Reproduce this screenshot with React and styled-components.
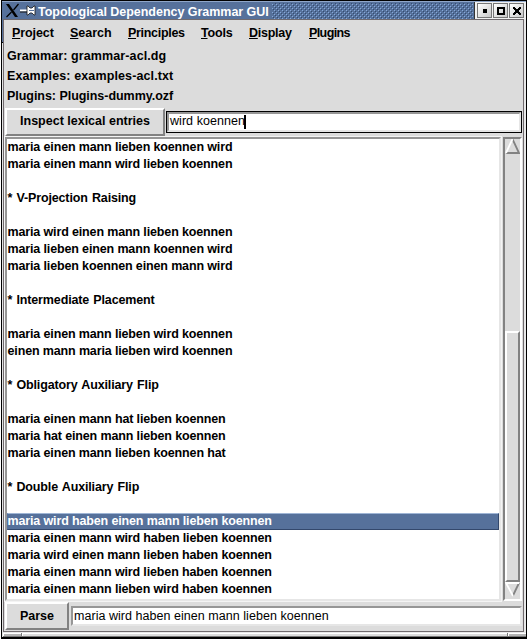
import React from "react";
import styled, { createGlobalStyle } from "styled-components";

const GlobalStyle = createGlobalStyle`
  * { box-sizing: border-box; }
  body { margin: 0; background: #fff; overflow: hidden; }
`;

const Frame = styled.div`
  width: 526px;
  height: 639px;
  margin-left: 1px;
  display: flex;
  flex-direction: column;
  border: solid #000;
  border-width: 1px 1px 2px 1px;
  background: linear-gradient(#56719b 0 41px, #000 41px 42px, #e4e4e4 42px) left / 2px 100% no-repeat #e8e8e8;
  font: bold 12.5px/17px "Liberation Sans", Arial, sans-serif;
  color: #000;
`;

const TitleBar = styled.header`
  height: 18px;
  flex: none;
  display: flex;
  align-items: center;
  background: #56719b;
  border-top: 1px solid #8fa6c8;
  color: #fff;
  padding-left: 4px;
`;

const TitleIcons = styled.svg`
  flex: none;
  width: 32px;
  height: 15px;
`;

const Title = styled.span`
  width: 234px;
  flex: none;
  white-space: pre;
  line-height: 17px;
  padding-top: 4px;
  letter-spacing: -0.03px;
`;

const Stipple = styled.div`
  flex: 1;
  height: 16px;
  background:
    conic-gradient(from 0deg at 1px 1px, transparent 75%, #86a9da 0) 0 1px / 4px 4px,
    conic-gradient(from 0deg at 1px 1px, transparent 75%, #86a9da 0) 2px 3px / 4px 4px,
    conic-gradient(from 0deg at 1px 1px, transparent 75%, #344c70 0) 1px 2px / 4px 4px,
    conic-gradient(from 0deg at 1px 1px, transparent 75%, #344c70 0) 3px 4px / 4px 4px,
    #56719b;
`;

const WindowButtons = styled.div`
  display: flex;
  align-self: stretch;
  gap: 1px;
  padding: 1px 0 0 2px;
  margin-left: 1px;
  width: 52px;
  background: #f0f0f0;
  border-left: 1px solid #333;
`;

const WindowButton = styled.span`
  width: 15px;
  height: 15px;
  border: 1px solid #777;
  background: linear-gradient(135deg, #fff, #c8c8c8);
  svg { display: block; width: 13px; height: 13px; }
`;

const Client = styled.main`
  width: 521px;
  height: 613px;
  flex: none;
  margin-left: 1px;
  display: flex;
  flex-direction: column;
  background: #dcdcdc;
  border: 1px solid #706a6e;
  padding: 0 1px 0 1px;
`;

const MenuBar = styled.nav`
  height: 26px;
  display: flex;
  padding: 5px 0 0 7px;
`;

const MenuItem = styled.span`
  width: ${(p) => p.$width}px;
  letter-spacing: ${(p) => p.$spacing}px;
  white-space: pre;
  u { text-decoration-thickness: 1px; text-underline-offset: 1px; text-decoration-skip-ink: none; }
`;

const InfoLine = styled.div`
  height: 20px;
  padding: 2px 0 0 2px;
  letter-spacing: ${(p) => p.$spacing}px;
  white-space: pre;
`;

const ControlRow = styled.div`
  display: flex;
  align-items: center;
  height: ${(p) => p.$height}px;
  gap: ${(p) => p.$gap}px;
  flex: none;
`;

const PushButton = styled.button`
  width: ${(p) => p.$width}px;
  height: 28px;
  padding: 0;
  flex: none;
  font: inherit;
  color: inherit;
  background: #dcdcdc;
  border: 2px solid;
  border-color: #fff #828282 #828282 #fff;
`;

const Entry = styled.div`
  flex: 1;
  height: ${(p) => (p.$focused ? 22 : 20)}px;
  border: ${(p) => (p.$focused ? "1px solid #000" : "0 solid")};
`;

const EntryField = styled.div`
  height: 100%;
  display: flex;
  align-items: center;
  background: #fff;
  border: 2px solid;
  border-color: #969696 #e6e6e6 #e6e6e6 #969696;
  padding-left: 1px;
  font-weight: 400;
  letter-spacing: ${(p) => p.$spacing}px;
  white-space: pre;
`;

const Caret = styled.i`
  width: 2px;
  height: 14px;
  margin-left: -1px;
  background: #000;
`;

const Body = styled.div`
  height: 464px;
  display: flex;
  flex: none;
`;

const ListBox = styled.div`
  width: 496px;
  border: 2px solid;
  border-color: #969696 #e6e6e6 #e6e6e6 #969696;
  background: #fff;
  outline: 1px solid #f4f4f4;
`;

const ListRow = styled.div`
  height: 17px;
  padding-left: ${(p) => (p.$selected ? 0 : 0.5)}px;
  letter-spacing: ${(p) => (p.$heading ? -0.14 : -0.14)}px;
  word-spacing: ${(p) => (p.$heading ? 0.9 : 0)}px;
  text-indent: ${(p) => (p.$selected ? -0.5 : 0)}px;
  white-space: pre;
  line-height: ${(p) => (p.$selected ? 15 : 17)}px;
  border: ${(p) => (p.$selected ? "1px solid" : "0 solid")};
  border-color: #9fb5d5 #33486c #33486c #56719b;
  background: ${(p) => (p.$selected ? "#56719b" : "#fff")};
  color: ${(p) => (p.$selected ? "#fff" : "#000")};
`;

const ScrollBar = styled.div`
  width: 19px;
  margin-left: 2px;
  display: flex;
  flex-direction: column;
  border: 2px solid;
  border-color: #828282 #fff #fff #828282;
  background: #dcdcdc;
  svg { display: block; flex: none; }
`;

const Track = styled.div`
  height: 177px;
`;

const Thumb = styled.div`
  height: 251px;
  border: 2px solid;
  border-color: #fff #828282 #828282 #fff;
`;

const ResizeBar = styled.footer`
  flex: 1;
  display: flex;
  margin: 1px 0 0 1px;
  gap: 1px;
  background: #777;
  border-bottom: 1px solid #777;
`;

const Grip = styled.span`
  flex: ${(p) => (p.$wide ? "1" : "0 0 18px")};
  background: ${(p) => (p.$wide ? "#dcdcdc" : "#b4b4b4")};
  border-top: 1px solid #fff;
  border-left: 1px solid #fff;
`;

const menus = [
  ["Project", 58, -0.1],
  ["Search", 58, 0],
  ["Principles", 73, -0.3],
  ["Tools", 48, -0.2],
  ["Display", 60, -0.25],
  ["Plugins", 50, -0.6],
];

const sentences = [
  "maria einen mann lieben koennen wird",
  "maria einen mann wird lieben koennen",
  "",
  "* V-Projection Raising",
  "",
  "maria wird einen mann lieben koennen",
  "maria lieben einen mann koennen wird",
  "maria lieben koennen einen mann wird",
  "",
  "* Intermediate Placement",
  "",
  "maria einen mann lieben wird koennen",
  "einen mann maria lieben wird koennen",
  "",
  "* Obligatory Auxiliary Flip",
  "",
  "maria einen mann hat lieben koennen",
  "maria hat einen mann lieben koennen",
  "maria einen mann lieben koennen hat",
  "",
  "* Double Auxiliary Flip",
  "",
  "maria wird haben einen mann lieben koennen",
  "maria einen mann wird haben lieben koennen",
  "maria wird einen mann lieben haben koennen",
  "maria einen mann wird lieben haben koennen",
  "maria einen mann lieben wird haben koennen",
];

function Arrow({ down }) {
  return (
    <svg width="15" height="15" viewBox="0 0 15 15" fill="none" strokeWidth="1.8">
      {down ? (
        <>
          <path d="M14 1 8 13.5" stroke="#828282" />
          <path d="M14 1H1L8 14" stroke="#fff" />
        </>
      ) : (
        <>
          <path d="M7.5 0 14 14H1" stroke="#828282" />
          <path d="M7.5 0 1 14" stroke="#fff" />
        </>
      )}
    </svg>
  );
}

export default function App() {
  return (
    <>
      <GlobalStyle />
      <Frame>
        <TitleBar>
          <TitleIcons viewBox="0 0 32 15">
            <path d="M0 1h3l9 13H9z" fill="#000" />
            <path d="M12.5 1 7.5 7M5.5 9 .5 14" stroke="#000" strokeWidth="1.2" />
            <path d="M14 6.5h7v2h-7z" fill="#fff" />
            <path d="M14 9h7" stroke="#111" />
            <path d="M21 3h1l2 2h2l2-2h1v9h-1l-2-2h-2l-2 2h-1z" fill="#fff" stroke="#111" strokeWidth=".8" />
            <path d="M23 7.5h5" stroke="#56719b" />
          </TitleIcons>
          <Title>Topological Dependency Grammar GUI</Title>
          <Stipple />
          <WindowButtons>
            <WindowButton>
              <svg viewBox="0 0 13 13"><path d="M5 5h4v4H5z" /></svg>
            </WindowButton>
            <WindowButton>
              <svg viewBox="0 0 13 13"><path d="M4 4h6v6H4z" fill="none" stroke="#000" strokeWidth="2" /></svg>
            </WindowButton>
            <WindowButton>
              <svg viewBox="0 0 13 13" shapeRendering="crispEdges">
                <path d="M3 3h2v1h1v1h2V4h1V3h2v2h-1v1H9v2h1v1h1v2H9v-1H8V9H6v1H5v1H3V9h1V8h1V6H4V5H3z" />
              </svg>
            </WindowButton>
          </WindowButtons>
        </TitleBar>
        <Client>
          <MenuBar>
            {menus.map(([name, width, spacing]) => (
              <MenuItem key={name} $width={width} $spacing={spacing}>
                <u>{name[0]}</u>
                {name.slice(1)}
              </MenuItem>
            ))}
          </MenuBar>
          <InfoLine $spacing={0.1}>Grammar: grammar-acl.dg</InfoLine>
          <InfoLine $spacing={0.12}>Examples: examples-acl.txt</InfoLine>
          <InfoLine $spacing={-0.04}>Plugins: Plugins-dummy.ozf</InfoLine>
          <ControlRow $height={31} $gap={1}>
            <PushButton $width={160}>Inspect lexical entries</PushButton>
            <Entry $focused>
              <EntryField $spacing={0.05}>
                wird koennen
                <Caret />
              </EntryField>
            </Entry>
          </ControlRow>
          <Body>
            <ListBox>
              {sentences.map((s, i) => (
                <ListRow key={i} $selected={i === 22} $heading={s[0] === "*"}>
                  {s}
                </ListRow>
              ))}
            </ListBox>
            <ScrollBar>
              <Arrow />
              <Track />
              <Thumb />
              <Arrow down />
            </ScrollBar>
          </Body>
          <ControlRow $height={30} $gap={2}>
            <PushButton $width={64}>Parse</PushButton>
            <Entry>
              <EntryField $spacing={0.04}>maria wird haben einen mann lieben koennen</EntryField>
            </Entry>
          </ControlRow>
        </Client>
        <ResizeBar>
          <Grip />
          <Grip $wide />
          <Grip />
        </ResizeBar>
      </Frame>
    </>
  );
}
